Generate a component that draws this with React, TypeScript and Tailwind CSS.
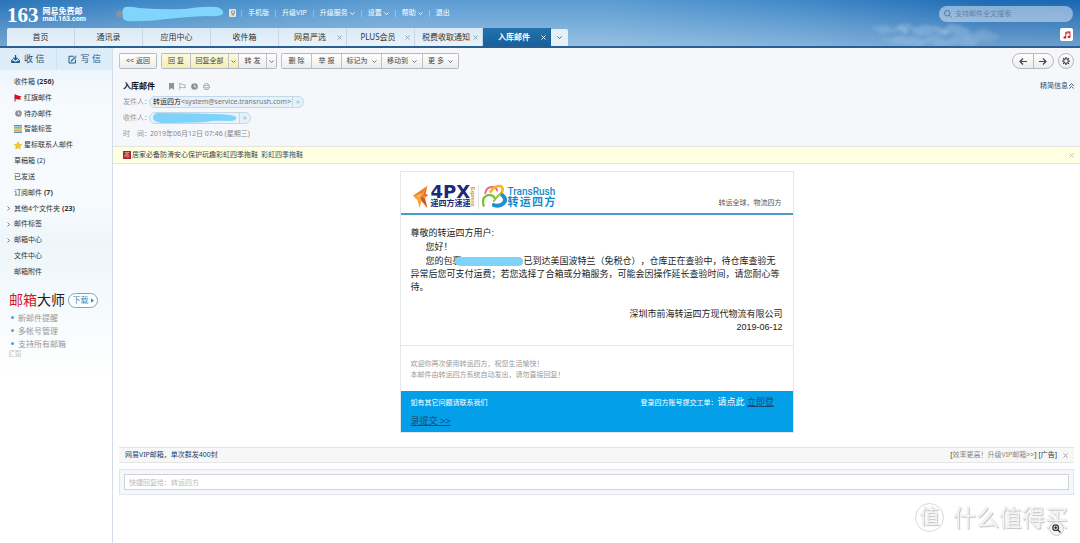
import React from "react";
import clsx from "clsx";

interface Tab {
  label: string;
  closable?: boolean;
  active?: boolean;
}

interface Folder {
  label: string;
  count?: string;
  strong?: boolean;
  expandable?: boolean;
  icon?: React.ReactNode;
}

interface ToolItem {
  label: string;
  name?: string;
  width: string;
  primary?: boolean;
  menu?: boolean;
}

const ChevronDown = ({ className = "" }: { className?: string }) => (
  <svg viewBox="0 0 10 6" className={clsx("w-[5px] h-[3px]", className)} fill="none" stroke="currentColor" strokeWidth="1.8" aria-hidden="true">
    <path d="M1 1l4 4 4-4" />
  </svg>
);

const ChevronRight = () => (
  <svg viewBox="0 0 6 10" className="w-[3px] h-[5px]" fill="none" stroke="#555" strokeWidth="1.6" aria-hidden="true">
    <path d="M1 1l4 4-4 4" />
  </svg>
);

const CloseIcon = ({ className = "" }: { className?: string }) => (
  <svg viewBox="0 0 10 10" className={clsx("w-[5px] h-[5px]", className)} fill="none" stroke="currentColor" strokeWidth="1.8" aria-hidden="true">
    <path d="M1 1l8 8M9 1l-8 8" />
  </svg>
);

const FlagIcon = () => (
  <svg viewBox="0 0 16 16" className="w-2 h-2" aria-hidden="true">
    <path d="M2 1v14" stroke="#a01420" strokeWidth="2" />
    <path d="M2 1l6 2 7 2-3 3 3 3-6 0-7-1z" fill="#d2101f" />
  </svg>
);

const ClockIcon = ({ className = "" }: { className?: string }) => (
  <svg viewBox="0 0 16 16" className={clsx("w-[7px] h-[7px]", className)} aria-hidden="true">
    <circle cx="8" cy="8" r="7.5" fill="#8d9297" />
    <path d="M8 3.5V9h4" fill="none" stroke="#fff" strokeWidth="1.6" />
  </svg>
);

const TagsIcon = () => (
  <svg viewBox="0 0 16 16" className="w-2 h-2" aria-hidden="true">
    <rect y="0" width="16" height="3" fill="#3fa3b4" />
    <rect y="4.3" width="16" height="3" fill="#7db84f" />
    <rect y="8.6" width="16" height="3" fill="#e9a33b" />
    <rect y="13" width="16" height="3" fill="#5a8fd0" />
  </svg>
);

const StarIcon = () => (
  <svg viewBox="0 0 16 16" className="w-[9px] h-[9px]" aria-hidden="true">
    <path d="M8 .5l2.3 5 5.4.6-4 3.7 1.1 5.4L8 12.5l-4.8 2.7 1.1-5.4-4-3.7 5.4-.6z" fill="#f7c81e" stroke="#d9a30c" strokeWidth=".8" />
  </svg>
);

const ReceiveIcon = () => (
  <svg viewBox="0 0 18 16" className="w-[9px] h-2" aria-hidden="true">
    <path d="M9 0v8M5 5.5l4 4 4-4" fill="none" stroke="#1d5b87" strokeWidth="2.6" />
    <path d="M3.5 8L1 11.5V15h16v-3.5L14.5 8" fill="none" stroke="#1d5b87" strokeWidth="2" />
    <path d="M2 11.5h4l1 2h4l1-2h4V15H2z" fill="#1d5b87" />
  </svg>
);

const ComposeIcon = () => (
  <svg viewBox="0 0 18 18" className="w-[9px] h-[9px]" fill="none" stroke="#1d5b87" aria-hidden="true">
    <path d="M11 2.5H2V16h13V9" strokeWidth="2" />
    <path d="M15.5 1.5L8 9.5l-2 3L9.5 11 17 3.5" strokeWidth="1.8" />
  </svg>
);

const tabs: Tab[] = [
  { label: "首页" },
  { label: "通讯录" },
  { label: "应用中心" },
  { label: "收件箱" },
  { label: "网易严选", closable: true },
  { label: "PLUS会员", closable: true },
  { label: "税费收取通知", closable: true },
  { label: "入库邮件", closable: true, active: true },
];

const topLinks = [
  { label: "手机版" },
  { label: "升级VIP" },
  { label: "升级服务", menu: true },
  { label: "设置", menu: true },
  { label: "帮助", menu: true },
  { label: "退出" },
];

const folders: Folder[] = [
  { label: "收件箱", count: "(256)", strong: true },
  { label: "红旗邮件", icon: <FlagIcon /> },
  { label: "待办邮件", icon: <ClockIcon /> },
  { label: "智能标签", icon: <TagsIcon /> },
  { label: "星标联系人邮件", icon: <StarIcon /> },
  { label: "草稿箱", count: "(2)" },
  { label: "已发送" },
  { label: "订阅邮件", count: "(7)", strong: true },
  { label: "其他4个文件夹", count: "(23)", strong: true, expandable: true },
  { label: "邮件标签", expandable: true },
  { label: "邮箱中心", expandable: true },
  { label: "文件中心" },
  { label: "邮箱附件" },
];

const toolGroups: ToolItem[][] = [
  [{ label: "<< 返回", width: "w-[37px]" }],
  [
    { label: "回 复", width: "w-[29px]", primary: true },
    { label: "回复全部", width: "w-[38px]", primary: true },
    { label: "", name: "回复选项", width: "w-[10px]", menu: true, primary: true },
    { label: "转 发", width: "w-[28px]" },
    { label: "", name: "转发选项", width: "w-[10px]", menu: true },
  ],
  [
    { label: "删 除", width: "w-[30px]" },
    { label: "举 报", width: "w-[30px]" },
    { label: "标记为", width: "w-[40px]", menu: true },
    { label: "移动到", width: "w-[41px]", menu: true },
    { label: "更 多", width: "w-[36px]", menu: true },
  ],
];

const Clouds = () => (
  <svg viewBox="0 0 240 30" className="absolute right-0 bottom-0 w-[240px] h-[30px] pointer-events-none" aria-hidden="true">
    <defs>
      <filter id="soft" x="-30%" y="-100%" width="160%" height="300%">
        <feTurbulence type="fractalNoise" baseFrequency="0.08 0.12" numOctaves="3" seed="4" result="noise" />
        <feDisplacementMap in="SourceGraphic" in2="noise" scale="12" result="rough" />
        <feGaussianBlur in="rough" stdDeviation="1.4" />
      </filter>
    </defs>
    <g fill="#fff" filter="url(#soft)">
      <ellipse cx="52" cy="14" rx="18" ry="3" opacity=".14" />
      <ellipse cx="64" cy="11" rx="9" ry="3" opacity=".18" />
      <ellipse cx="90" cy="15" rx="18" ry="4" opacity=".18" />
      <ellipse cx="114" cy="13" rx="14" ry="4" opacity=".2" />
      <ellipse cx="136" cy="19" rx="22" ry="4" opacity=".14" />
      <ellipse cx="98" cy="25" rx="56" ry="4" opacity=".14" />
    </g>
  </svg>
);

const Header = () => (
  <header className="relative flex flex-col h-12 border-b-2 border-[#2a5f93] bg-[linear-gradient(to_bottom,rgba(255,255,255,0)_0%,rgba(255,255,255,0.36)_100%),linear-gradient(to_right,#2873b8_0%,#3f88c6_14%,#5b9cd2_36%,#5b9cd2_56%,#4189c8_74%,#1c69b3_92%,#1a68b2_100%)]">
    <Clouds />
    <div className="relative flex h-7 px-[7px] text-white">
      <div className="flex items-center w-[108px] gap-1 pt-px">
        <span className="font-['Liberation_Serif',serif] font-bold text-[21px] leading-[22px]">163</span>
        <div className="font-bold whitespace-nowrap">
          <div className="text-[8px] leading-[9px]">网易免费邮</div>
          <div className="font-['Roboto',sans-serif] text-[7px] leading-[8px]">mail.163.com</div>
        </div>
      </div>
      <svg viewBox="0 0 110 20" className="w-[110px] h-5 mt-[3px]" aria-hidden="true">
        <path d="M1 8l2 2 1-4 2 3 3-2-1 6-3 2-4-2z" fill="#8494a4" />
        <path d="M10 4Q14 3 24 5Q48 7 70 6Q88 3 102 4Q109 6 108 11Q104 14 92 13Q70 14 52 16Q30 19 12 18Q6 16 8 12Q6 7 10 4z" fill="#80d5fd" />
      </svg>
      <nav className="flex items-center ml-1 pb-[2px]">
        <span className="flex items-center justify-center w-[7px] h-2 rounded-[1px] bg-[#e9e4dd] mr-[5px]">
          <svg viewBox="0 0 6 8" className="w-1 h-1.5" fill="none" stroke="#777" aria-hidden="true">
            <rect x="1" y="1" width="4" height="3.5" />
            <path d="M3 4.5V7M1 7h4" />
          </svg>
        </span>
        {topLinks.map((link) => (
          <a key={link.label} href="#" className="flex items-center gap-[2px] px-1.5 whitespace-nowrap border-l border-white/30 h-[7px]">
            {link.label}
            {link.menu && <ChevronDown />}
          </a>
        ))}
      </nav>
      <label className="flex items-center ml-auto mt-1.5 w-[134px] h-4 pl-[5px] rounded-full bg-white/45">
        <svg viewBox="0 0 16 16" className="w-2 h-2 shrink-0" fill="none" stroke="#47749f" strokeWidth="1.8" aria-hidden="true">
          <circle cx="6.5" cy="6.5" r="5.5" />
          <path d="M10.5 10.5L15 15" />
        </svg>
        <input type="text" aria-label="搜索" placeholder="支持邮件全文搜索" className="ml-[3px] w-full min-w-0 bg-transparent outline-none placeholder:text-[#5f83a8]" />
      </label>
    </div>
    <div className="relative flex flex-1 px-[7px]">
      {tabs.map((tab) => (
        <button
          key={tab.label}
          className={clsx(
            "flex items-center w-[68px] text-[8px] whitespace-nowrap border-r first:rounded-tl-[2px]",
            tab.closable && "px-1",
            tab.active
              ? "bg-[linear-gradient(#2471ab,#17609c)] border-[#17609c] text-white font-bold"
              : "bg-[linear-gradient(#d9e9f6,#e9f2fa)] border-[#c6d8e8] text-[#333]"
          )}
        >
          <span className="flex-1 text-center">{tab.label}</span>
          {tab.closable && <CloseIcon className={tab.active ? "text-white" : "text-[#8d9cab]"} />}
        </button>
      ))}
      <button aria-label="更多标签" className="flex items-center justify-center w-[17px] mt-px bg-[#e6f0f9] rounded-tr-[2px] text-[#555]">
        <ChevronDown />
      </button>
      <button aria-label="音乐" className="flex items-center justify-center ml-auto w-[13px] h-[13px] bg-white rounded-[2px]">
        <svg viewBox="0 0 16 16" className="w-2 h-2" aria-hidden="true">
          <path d="M5.5 12.5v-10l8.5-1v10" fill="none" stroke="#c32a38" strokeWidth="2" />
          <path d="M5.5 4.5l8.5-1" stroke="#c32a38" strokeWidth="2.5" />
          <ellipse cx="3.8" cy="13" rx="3" ry="2.3" fill="#c32a38" />
          <ellipse cx="12" cy="12" rx="3" ry="2.3" fill="#c32a38" />
        </svg>
      </button>
    </div>
  </header>
);

const Sidebar = () => (
  <aside className="shrink-0 w-[113px] border-r border-[#d3dde8] bg-[linear-gradient(#eaf4fb_0px,#f6fafd_60px,#f7fbfd_150px,#eef6fb_195px,#f3f9fc_240px,#ffffff_330px)]">
    <div className="flex h-[22px] bg-[#dcecf8] text-[9px] text-[#1f4f78]">
      <button className="flex flex-1 items-center justify-center gap-1 border-r border-[#cfe2f1]">
        <ReceiveIcon />收 信
      </button>
      <button className="flex flex-1 items-center justify-center gap-1">
        <ComposeIcon />写 信
      </button>
    </div>
    <ul className="flex flex-col justify-between h-[202px] mt-1.5 text-[#333]">
      {folders.map((folder) => (
        <li key={folder.label}>
          <a href="#" className="flex items-center h-3 whitespace-nowrap">
            <span className="flex items-center w-3.5 pl-[7px]">{folder.expandable && <ChevronRight />}</span>
            {folder.icon && <span className="flex items-center justify-center w-2 mr-[2px]">{folder.icon}</span>}
            {folder.label}
            {folder.count && <span className={clsx("ml-[2px]", folder.strong && "font-bold")}>{folder.count}</span>}
          </a>
        </li>
      ))}
    </ul>
    <div className="mt-3.5 pl-[9px]">
      <div className="flex items-center gap-[3px] h-4">
        <span className="text-[14px] leading-4 text-[#222] whitespace-nowrap">
          <span className="text-[#d5152c]">邮箱</span>大师
        </span>
        <a href="#" className="flex items-center justify-center gap-[2px] w-[30px] h-[15px] rounded-full border border-[#6fa9cf] bg-white text-[8px] text-[#3f87b9] whitespace-nowrap">
          下载
          <svg viewBox="0 0 4 6" className="w-[3px] h-[5px]" aria-hidden="true"><path d="M0 0l4 3-4 3z" fill="#3f87b9" /></svg>
        </a>
      </div>
      <ul className="mt-[3px] pl-[2px] text-[8px] leading-[13px] text-[#999]">
        {["新邮件提醒", "多帐号管理", "支持所有邮箱"].map((item) => (
          <li key={item} className="flex items-center gap-1">
            <span className="w-[3px] h-[3px] rounded-full bg-[#5aa0cc]" />
            {item}
          </li>
        ))}
      </ul>
      <span className="flex items-center justify-center w-3 h-[7px] border border-[#ddd] text-[5px] leading-none text-[#aaa] whitespace-nowrap">广告</span>
    </div>
  </aside>
);

const Toolbar = () => (
  <div className="flex items-center gap-1 pt-[5px] px-1.5">
    {toolGroups.map((group, i) => (
      <div key={i} className="flex h-4 border-y border-r border-[#b5b9be] rounded-[2px] overflow-hidden">
        {group.map((item) => (
          <button
            key={item.name ?? item.label}
            aria-label={item.name}
            className={clsx(
              "flex items-center justify-center gap-1 text-[#444] whitespace-nowrap border-l border-[#bfc3c8]",
              item.width,
              item.primary ? "bg-[linear-gradient(#fdfbe0,#f3edb6)]" : "bg-[linear-gradient(#ffffff,#ececec)]"
            )}
          >
            {item.label}
            {item.menu && <ChevronDown className="text-[#666]" />}
          </button>
        ))}
      </div>
    ))}
    <div className="flex ml-auto h-4 w-[42px] border border-[#b5b9be] rounded-full divide-x divide-[#b5b9be] bg-[linear-gradient(#ffffff,#ececec)]">
      <button aria-label="上一封" className="flex flex-1 items-center justify-center">
        <svg viewBox="0 0 16 14" className="w-2 h-[7px]" fill="none" stroke="#444" strokeWidth="2.4" aria-hidden="true"><path d="M16 7H2M8 1L2 7l6 6" /></svg>
      </button>
      <button aria-label="下一封" className="flex flex-1 items-center justify-center">
        <svg viewBox="0 0 16 14" className="w-2 h-[7px]" fill="none" stroke="#444" strokeWidth="2.4" aria-hidden="true"><path d="M0 7h14M8 1l6 6-6 6" /></svg>
      </button>
    </div>
    <button aria-label="设置" className="flex items-center justify-center w-4 h-4 rounded-full border border-[#b5b9be] bg-[linear-gradient(#ffffff,#ececec)]">
      <svg viewBox="0 0 16 16" className="w-2 h-2" aria-hidden="true">
        <circle cx="8" cy="8" r="4.6" fill="none" stroke="#333" strokeWidth="2" />
        <path d="M8 0v3M8 13v3M0 8h3M13 8h3M2.3 2.3l2.2 2.2M11.5 11.5l2.2 2.2M2.3 13.7l2.2-2.2M11.5 4.5l2.2-2.2" stroke="#333" strokeWidth="2.4" />
      </svg>
    </button>
  </div>
);

const AddButton = () => (
  <button aria-label="添加联系人" className="flex items-center justify-center w-[11px] h-full border-l border-[#c3d9ea] text-[#9fbcd3]">
    <svg viewBox="0 0 8 8" className="w-1 h-1" fill="none" stroke="currentColor" strokeWidth="1.5" aria-hidden="true"><path d="M4 0v8M0 4h8" /></svg>
  </button>
);

const MailInfo = () => (
  <div className="pl-2.5 pr-1.5 pb-1 text-[#999]">
    <div className="flex items-center h-4 mt-[9px]">
      <h1 className="text-[8px] font-bold text-[#111]">入库邮件</h1>
      <div className="flex items-center gap-[5px] ml-3.5 text-[#8d9297]">
        <svg viewBox="0 0 10 14" className="w-[5px] h-[7px]" aria-hidden="true"><path d="M0 0h10v14l-5-4-5 4z" fill="currentColor" /></svg>
        <svg viewBox="0 0 14 14" className="w-[7px] h-[7px]" fill="none" stroke="currentColor" strokeWidth="1.3" aria-hidden="true"><path d="M1.5 0v14M1.5 1.5l5 1 6.500 2-2.500 2 2.500 2.500-6 .5-5.500-1" /></svg>
        <ClockIcon />
        <svg viewBox="0 0 14 14" className="w-[7px] h-[7px]" fill="none" stroke="currentColor" strokeWidth="1.4" aria-hidden="true"><path d="M3 5V3.5Q3 1 7 1t4 2.5V5M1 5h12v4.5H1zM3.5 9.5V13h7V9.5" /></svg>
      </div>
      <a href="#" className="flex items-center gap-px ml-auto text-[#1d5377]">
        精简信息
        <svg viewBox="0 0 8 10" className="w-[5px] h-1.5" fill="none" stroke="currentColor" strokeWidth="1.5" aria-hidden="true"><path d="M0 5l4-4 4 4M0 9.5l4-4 4 4" /></svg>
      </a>
    </div>
    <div className="flex items-center h-4">
      <span className="w-[26px] whitespace-nowrap">发件人：</span>
      <span className="flex items-center h-3 pl-[3px] rounded-full border border-[#c3d9ea] bg-[#e6f1f9]">
        <span className="pr-px whitespace-nowrap">
          <span className="text-[#222]">转运四方</span>
          <span className="text-[#777]">&lt;system@service.transrush.com&gt;</span>
        </span>
        <AddButton />
      </span>
    </div>
    <div className="flex items-center h-4">
      <span className="w-[26px] whitespace-nowrap">收件人：</span>
      <span className="flex items-center h-3 pl-[2px] rounded-full border border-[#c3d9ea] bg-[#e6f1f9]">
        <svg viewBox="0 0 87 10" className="w-[87px] h-2.5" aria-hidden="true">
          <path d="M5 0Q30 0 60 1Q80 1 84 4Q85 8 78 8Q60 7 55 9Q30 10 10 10Q1 9 1 5Q1 1 5 0z" fill="#7fd3fb" />
        </svg>
        <AddButton />
      </span>
    </div>
    <div className="flex items-center h-4">
      <span className="w-[26px] whitespace-pre">时&#8194;&#8194;间：</span>
      <time className="pl-px text-[#888]">2019年06月12日 07:46 (星期三)</time>
    </div>
  </div>
);

const FourPxLogo = () => (
  <div className="flex items-center">
    <svg viewBox="0 0 50 72" className="w-[17px] h-6" aria-hidden="true">
      <path d="M46 2L34 24l4 14-14-4L2 32z" fill="#ef8322" />
      <path d="M2 32l22 2 4 14-6 22-6-24z" fill="#f7a53a" />
      <path d="M24 34l14 4 8 32-18-22z" fill="#d4581a" />
      <path d="M46 2L34 24l4 14 10-8-8-4z" fill="#e36a1c" />
      <path d="M10 32l24-8-10 10z" fill="#fff" opacity=".45" />
    </svg>
    <div className="ml-[2px] text-[#1c2a78] font-bold whitespace-nowrap">
      <div className="font-['DejaVu_Sans',sans-serif] text-[18px] leading-[14px]">4PX</div>
      <div className="text-[8px] leading-[9px]">递四方速递</div>
    </div>
    <span className="[writing-mode:vertical-rl] text-[5px] leading-[4px] font-bold text-[#e8822a]">Express</span>
  </div>
);

const TransRushLogo = () => (
  <div className="flex items-center">
    <svg viewBox="0 0 76 76" className="w-[25px] h-[25px]" fill="none" strokeLinecap="round" aria-hidden="true">
      <path d="M5 66Q-2 40 18 34Q34 32 38 42" stroke="#7cbf3f" strokeWidth="7" />
      <path d="M10 28Q12 10 30 9Q44 9 46 20" stroke="#ef6a8d" strokeWidth="6" />
      <path d="M26 24Q40 2 58 7Q68 14 58 28" stroke="#f6b51e" strokeWidth="8" />
      <path d="M58 28Q44 38 36 52" stroke="#8fc645" strokeWidth="6" />
      <path d="M62 34Q76 46 66 58Q54 70 36 64" stroke="#1e90d2" strokeWidth="12" />
    </svg>
    <div className="ml-px text-[#1689c9] whitespace-nowrap">
      <div className="font-['Roboto',sans-serif] font-medium text-[10px] leading-[11px]">TransRush</div>
      <div className="flex justify-between font-bold text-[11px] leading-[11px]">
        {["转", "运", "四", "方"].map((char) => (
          <span key={char}>{char}</span>
        ))}
      </div>
    </div>
  </div>
);

const MailCard = () => (
  <article className="w-full max-w-[394px] mx-auto mt-[7px] border border-[#e6e6e6] bg-white font-['Liberation_Sans','Noto_Sans_CJK_SC',sans-serif]">
    <div className="flex items-center h-[43px] px-[11px] pt-2 border-b-2 border-[#4a9bc6]">
      <FourPxLogo />
      <span className="w-px h-6 mx-[3px] bg-[#e3e3e3]" />
      <TransRushLogo />
      <span className="ml-auto pt-3 text-[#555]">转运全球，物流四方</span>
    </div>
    <div className="px-2.5 pt-3 pb-[11px] text-[9px] leading-[13px] text-[#222]">
      <p className="mb-px">尊敬的转运四方用户:</p>
      <p className="pl-[15px]">您好！</p>
      <p className="mt-px indent-[15px] [text-spacing-trim:space-all]">
        您的包裹
        <svg viewBox="0 0 70 9" className="inline-block w-[70px] h-[9px] -ml-2 align-middle" aria-hidden="true">
          <path d="M4 0H66Q70 2 69 5Q69 9 64 9H6Q0 8 1 4Q1 1 4 0z" fill="#7fd3fb" />
        </svg>
        已到达美国波特兰（免税仓），仓库正在查验中，待仓库查验无异常后您可支付运费；若您选择了合箱或分箱服务，可能会因操作延长查验时间，请您耐心等待。
      </p>
      <p className="mt-3.5 text-right">深圳市前海转运四方现代物流有限公司</p>
      <p className="text-right">2019-06-12</p>
    </div>
    <div className="px-2.5 pt-3 pb-[11px] border-t border-[#e6e6e6] leading-[11px] text-[#999]">
      <p>欢迎你再次使用转运四方，祝您生活愉快！</p>
      <p>本邮件由转运四方系统自动发出，请勿直接回复！</p>
    </div>
    <div className="px-2.5 py-[2px] bg-[#039fe8] text-[9px] leading-[18px] text-white">
      <span className="inline-block w-[230px] text-[7px]">如有其它问题请联系我们</span>
      <span className="text-[7px]">登录四方账号提交工单：</span>
      请点此 <a href="#" className="underline text-[#1a4a78]">立即登录提交 &gt;&gt;</a>
    </div>
  </article>
);

const Watermark = () => (
  <div className="fixed right-3 bottom-2 flex items-center gap-[9px] text-[#f4f4f4] [text-shadow:1px_1px_1px_#c4c4c4,0_0_1px_#ccc] pointer-events-none">
    <span className="flex items-center justify-center w-[29px] h-[29px] rounded-full border border-[#d8d8d8] text-[20px] leading-none">值</span>
    <span className="text-[23px] leading-[36px] whitespace-nowrap">什么值得买</span>
  </div>
);

export default function App() {
  return (
    <div className="flex flex-col min-h-screen bg-white font-['Noto_Sans','Noto_Sans_CJK_SC',sans-serif] text-[7px] leading-[12px]">
      <Header />
      <div className="flex flex-1">
        <Sidebar />
        <main className="flex-1 min-w-0">
          <div className="bg-[#f5f7fb]">
            <Toolbar />
            <MailInfo />
          </div>
          <div className="flex items-center h-[18px] pl-2.5 pr-1.5 border-y border-[#e2e6dc] bg-[#ffffe1] text-[#444]">
            <svg viewBox="0 0 16 16" className="w-2 h-2 mr-px" aria-hidden="true">
              <rect width="16" height="16" fill="#a8232b" />
              <path d="M3 3h10M6 3v4M10 3v4M3 8h10M4 8v5M8 5v8M12 10l-3 4" fill="none" stroke="#e9c5c5" strokeWidth="1.2" />
            </svg>
            居家必备防滑安心保护玩趣彩虹四季拖鞋
            <a href="#" className="ml-[3px] text-[#1d5377]">彩虹四季拖鞋</a>
            <button aria-label="关闭" className="ml-auto text-[#bbb]"><CloseIcon /></button>
          </div>
          <MailCard />
          <div className="mx-1.5 mt-3.5">
            <div className="flex items-center h-4 px-1.5 border-y border-[#e4e4e4] bg-[#f7f7f7]">
              <a href="#" className="text-[#1d3f6b]">网易VIP邮箱，单次群发400封</a>
              <span className="ml-auto text-[#333]">
                [<a href="#" className="text-[#888]">效率更高！升级VIP邮箱&gt;&gt;</a>] [广告]
              </span>
              <button aria-label="关闭广告" className="ml-1.5 text-[#999]"><CloseIcon /></button>
            </div>
            <div className="mt-1.5 p-1 border border-[#e1e6ee] bg-[#f5f7fb]">
              <input
                type="text"
                aria-label="快捷回复"
                placeholder="快捷回复给：转运四方"
                className="block w-full h-4 px-1 border border-[#cfd3d9] bg-white outline-none placeholder:text-[#bbb]"
              />
            </div>
          </div>
        </main>
      </div>
      <Watermark />
      <button aria-label="放大" className="fixed right-4 bottom-[7px] flex items-center justify-center w-[15px] h-[15px] rounded-full border border-[#ccc] bg-[#f4f4f4]">
        <svg viewBox="0 0 16 16" className="w-[9px] h-[9px]" fill="none" stroke="#333" strokeWidth="2.2" aria-hidden="true">
          <circle cx="6.5" cy="6.5" r="5" />
          <path d="M10.5 10.5L15 15M4 6.5h5M6.5 4v5" />
        </svg>
      </button>
    </div>
  );
}
